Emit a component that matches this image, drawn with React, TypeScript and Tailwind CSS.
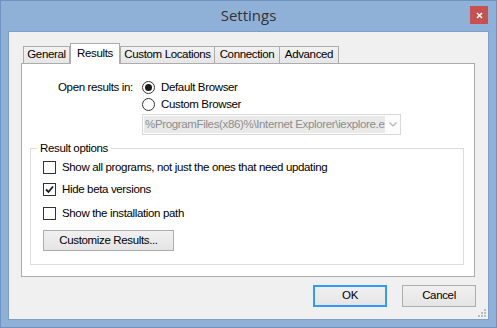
import React from 'react'

const tabs = [
  { name: 'General', w: 'w-[47px] ml-[2px]' },
  { name: 'Results', w: 'w-[50px]' },
  { name: 'Custom Locations', w: 'w-[95px]' },
  { name: 'Connection', w: 'w-[66px] -ml-[1px]' },
  { name: 'Advanced', w: 'w-[60px] -ml-[1px]' },
]

function Radio({ checked }: { checked?: boolean }) {
  return (
    <span className="w-[13px] h-[13px] rounded-full border border-[#333333] bg-white flex items-center justify-center shrink-0">
      {checked && <span className="w-[7px] h-[7px] rounded-full bg-[#1a1a1a]" />}
    </span>
  )
}

function Check({ checked }: { checked?: boolean }) {
  return (
    <span className="w-[13px] h-[13px] border border-[#333333] bg-white flex items-center justify-center shrink-0">
      {checked && (
        <svg width="9" height="9" viewBox="0 0 9 9">
          <path d="M1 4.5 L3.5 7 L8 1.5" stroke="#1a1a1a" strokeWidth="1.8" fill="none" />
        </svg>
      )}
    </span>
  )
}

export default function App() {
  return (
    <div
      className="w-[497px] h-[328px] bg-[#8fb0d7] border border-[#6f93c0] flex flex-col text-[11.5px] tracking-[-0.35px] text-black overflow-hidden"
      style={{ fontFamily: '"Segoe UI", "Liberation Sans", Arial, sans-serif' }}
    >
      {/* title bar */}
      <div className="h-[30px] shrink-0 relative flex items-center justify-center tracking-normal">
        <span className="text-[15px] text-[#333333] pb-[1px]" style={{ fontFamily: '"Segoe UI", "Open Sans", sans-serif' }}>Settings</span>
        <div className="absolute right-[8px] top-[5px] w-[18px] h-[18px] bg-[#c75050] flex items-center justify-center">
          <svg width="7" height="7" viewBox="0 0 7 7">
            <path d="M1 1 L6 6 M6 1 L1 6" stroke="#ffffff" strokeWidth="1.6" />
          </svg>
        </div>
      </div>

      {/* client */}
      <div className="flex-1 mx-[7px] mb-[7px] border border-[#7d9fc9] bg-[#f0f0f0] flex flex-col relative">
        <div className="pl-[12px] pt-[11px] flex flex-col">
          {/* tabs */}
          <div className="flex items-end h-[20px] relative z-10">
            {tabs.map((t) =>
              t.name === 'Results' ? (
                <div
                  key={t.name}
                  className={`${t.w} h-[21px] -mb-[1px] border border-b-0 border-[#acacac] bg-white flex justify-center items-start pt-[1px] whitespace-nowrap`}
                >
                  {t.name}
                </div>
              ) : (
                <div
                  key={t.name}
                  className={`${t.w} h-[17px] border border-b-0 border-[#acacac] bg-gradient-to-b from-[#f2f2f2] to-[#e6e6e6] flex justify-center items-center whitespace-nowrap`}
                >
                  {t.name}
                </div>
              )
            )}
          </div>

          {/* panel */}
          <div className="w-[454px] h-[214px] border border-[#acacac] bg-white flex flex-col">
            <div className="flex pt-[15px] pl-[36px]">
              <div className="w-[84px] h-[17px] flex items-center whitespace-nowrap">Open results in:</div>
              <div className="flex flex-col">
                <div className="flex items-center gap-[6px] h-[17px]">
                  <Radio checked />
                  <span>Default Browser</span>
                </div>
                <div className="flex items-center gap-[6px] h-[17px]">
                  <Radio />
                  <span>Custom Browser</span>
                </div>
                <div className="mt-[1px] w-[259px] h-[21px] border border-[#d9d9d9] bg-[#fcfcfc] flex items-center pl-[1px]">
                  <div className="w-[241px] h-[17px] bg-[#e9e9e9] text-[#8d8d8d] flex items-center pl-[1px] overflow-hidden whitespace-nowrap">
                    %ProgramFiles(x86)%\Internet Explorer\iexplore.exe
                  </div>
                  <div className="flex-1 flex items-center justify-center">
                    <svg width="8" height="5" viewBox="0 0 8 5">
                      <path d="M0.5 0.5 L4 4 L7.5 0.5" stroke="#b4b4b4" strokeWidth="1.2" fill="none" />
                    </svg>
                  </div>
                </div>
              </div>
            </div>

            {/* group box */}
            <div className="ml-[8px] mr-[10px] mt-[13px] h-[117px] border border-[#dcdcdc] relative flex flex-col pl-[12px] pt-[10px]">
              <span className="absolute -top-[9px] left-[6px] bg-white px-[3px] leading-[16px]">Result options</span>
              <div className="flex items-center gap-[6px] h-[17px]">
                <Check />
                <span>Show all programs, not just the ones that need updating</span>
              </div>
              <div className="flex items-center gap-[6px] h-[17px] mt-[5px]">
                <Check checked />
                <span>Hide beta versions</span>
              </div>
              <div className="flex items-center gap-[6px] h-[17px] mt-[7px]">
                <Check />
                <span>Show the installation path</span>
              </div>
              <div className="mt-[8px] w-[131px] h-[21px] border border-[#adadad] bg-gradient-to-b from-[#f0f0f0] to-[#e5e5e5] flex items-center justify-center">
                Customize Results...
              </div>
            </div>
          </div>
        </div>

        {/* buttons */}
        <div className="flex justify-end gap-[15px] pr-[12px] mt-[8px]">
          <div className="w-[74px] h-[22px] border border-[#3399ff] shadow-[inset_0_0_0_1px_#3399ff] bg-gradient-to-b from-[#f0f0f0] to-[#e5e5e5] flex items-center justify-center">
            OK
          </div>
          <div className="w-[74px] h-[22px] border border-[#adadad] bg-gradient-to-b from-[#f0f0f0] to-[#e5e5e5] flex items-center justify-center">
            Cancel
          </div>
        </div>

        {/* size grip */}
        <svg className="absolute right-[1px] bottom-[1px]" width="10" height="10" viewBox="0 0 10 10">
          <rect x="7" y="1" width="2" height="2" fill="#bcbcbc" />
          <rect x="4" y="4" width="2" height="2" fill="#bcbcbc" />
          <rect x="7" y="4" width="2" height="2" fill="#bcbcbc" />
          <rect x="1" y="7" width="2" height="2" fill="#bcbcbc" />
          <rect x="4" y="7" width="2" height="2" fill="#bcbcbc" />
          <rect x="7" y="7" width="2" height="2" fill="#bcbcbc" />
        </svg>
      </div>
    </div>
  )
}
